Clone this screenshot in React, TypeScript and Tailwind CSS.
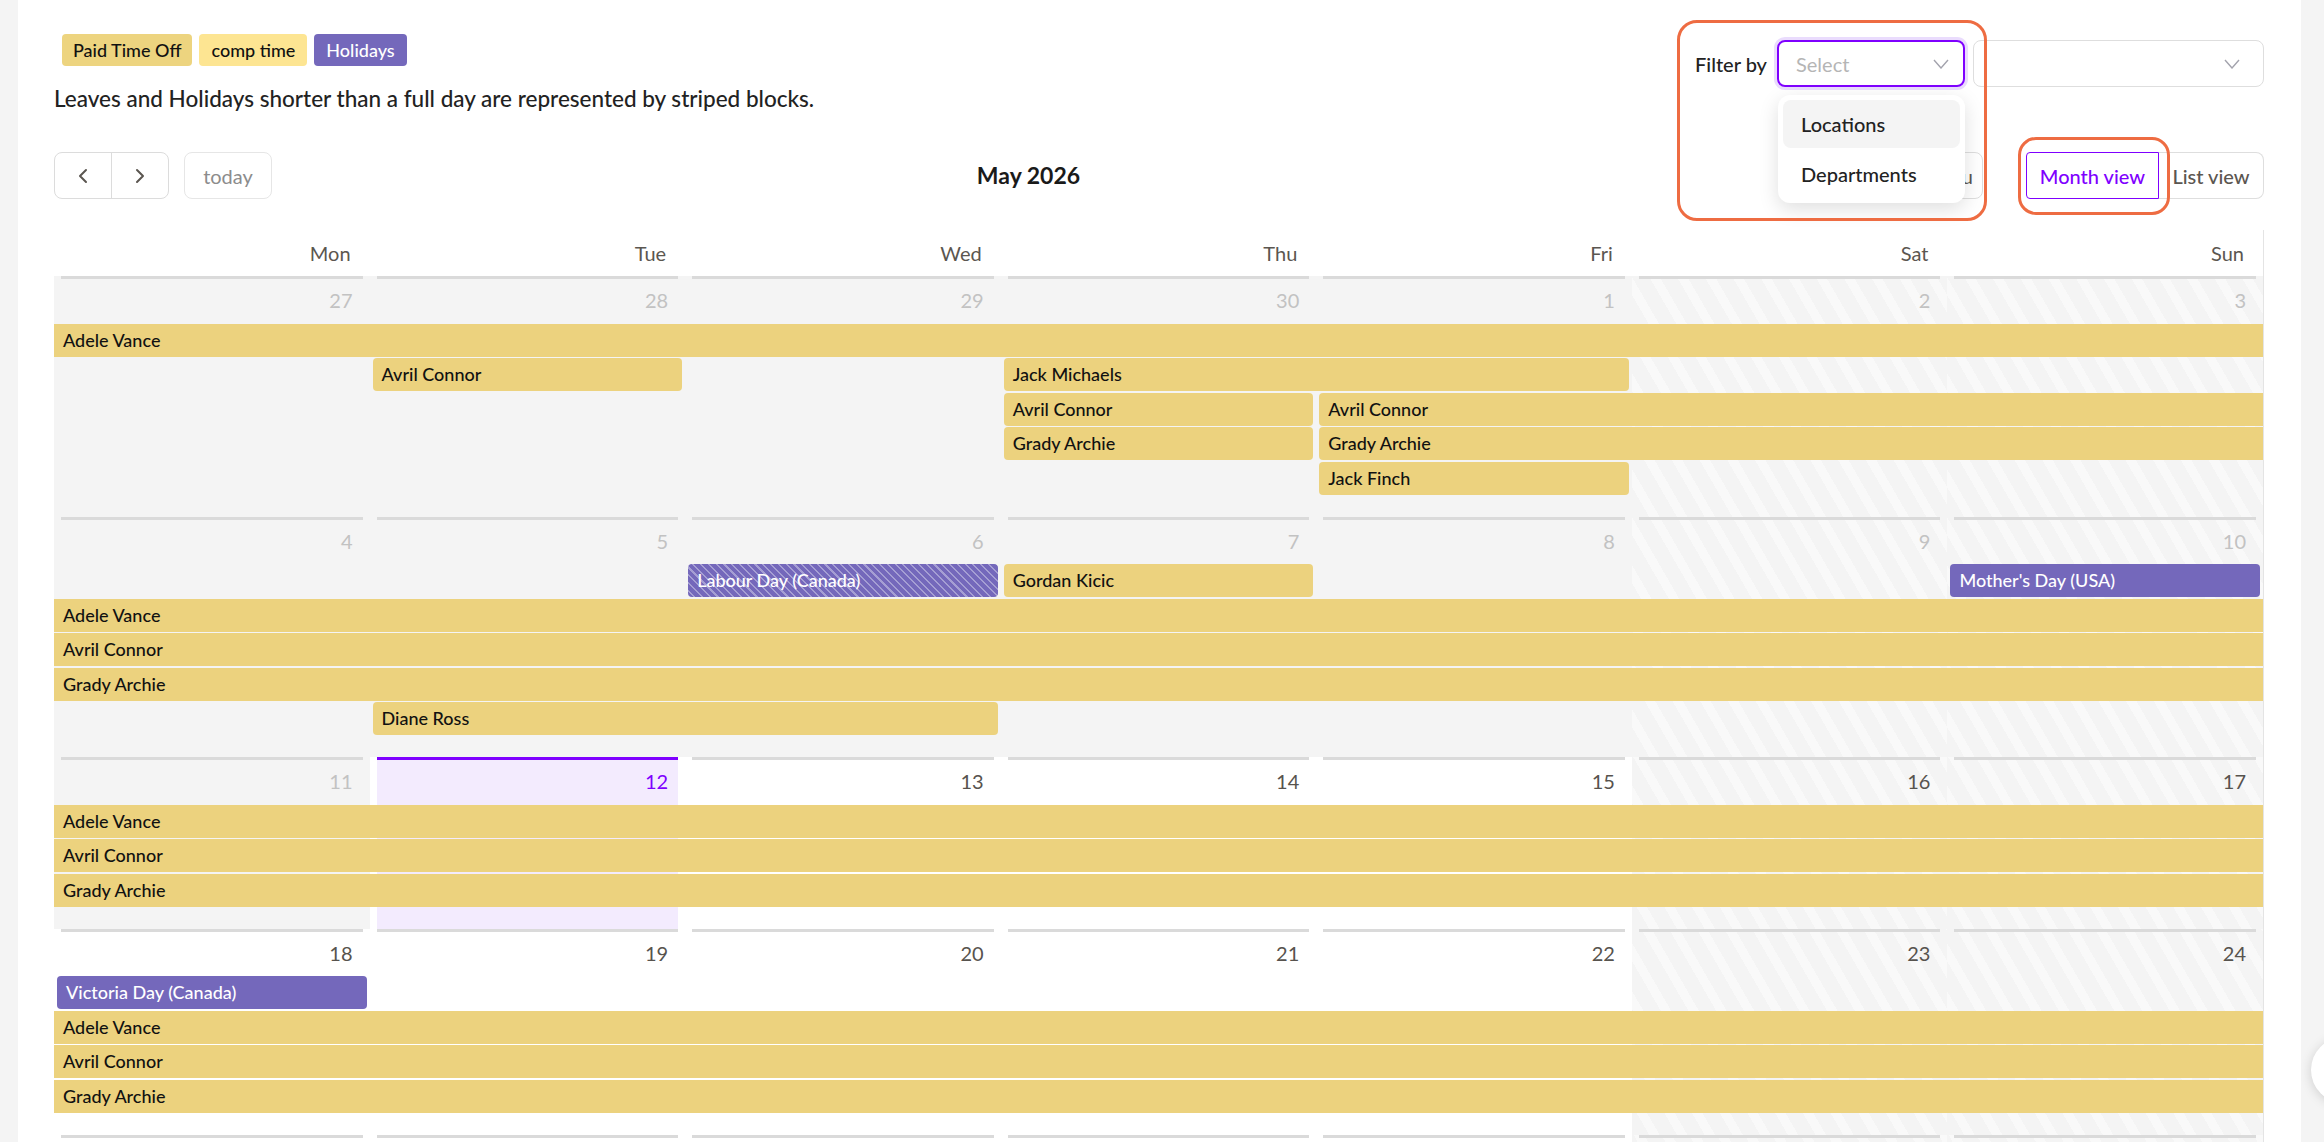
import React from "react";
import { ChevronLeft, ChevronRight } from "lucide-react";

type Kind = "pto" | "holiday" | "holidayHalf";
type Ev = { label: string; start: number; span: number; kind?: Kind; contL?: boolean; contR?: boolean };
type DayState = "other" | "past" | "today" | "future";
type Week = { days: [number, DayState][]; rows: Ev[][] };

const full = (label: string): Ev => ({ label, start: 0, span: 7, contL: true, contR: true });

const weeks: Week[] = [
  {
    days: [[27, "other"], [28, "other"], [29, "other"], [30, "other"], [1, "past"], [2, "past"], [3, "past"]],
    rows: [
      [full("Adele Vance")],
      [{ label: "Avril Connor", start: 1, span: 1 }, { label: "Jack Michaels", start: 3, span: 2 }],
      [{ label: "Avril Connor", start: 3, span: 1 }, { label: "Avril Connor", start: 4, span: 3, contR: true }],
      [{ label: "Grady Archie", start: 3, span: 1 }, { label: "Grady Archie", start: 4, span: 3, contR: true }],
      [{ label: "Jack Finch", start: 4, span: 1 }],
    ],
  },
  {
    days: [[4, "past"], [5, "past"], [6, "past"], [7, "past"], [8, "past"], [9, "past"], [10, "past"]],
    rows: [
      [
        { label: "Labour Day (Canada)", start: 2, span: 1, kind: "holidayHalf" },
        { label: "Gordan Kicic", start: 3, span: 1 },
        { label: "Mother's Day (USA)", start: 6, span: 1, kind: "holiday" },
      ],
      [full("Adele Vance")],
      [full("Avril Connor")],
      [full("Grady Archie")],
      [{ label: "Diane Ross", start: 1, span: 2 }],
    ],
  },
  {
    days: [[11, "past"], [12, "today"], [13, "future"], [14, "future"], [15, "future"], [16, "future"], [17, "future"]],
    rows: [[full("Adele Vance")], [full("Avril Connor")], [full("Grady Archie")]],
  },
  {
    days: [[18, "future"], [19, "future"], [20, "future"], [21, "future"], [22, "future"], [23, "future"], [24, "future"]],
    rows: [
      [{ label: "Victoria Day (Canada)", start: 0, span: 1, kind: "holiday" }],
      [full("Adele Vance")],
      [full("Avril Connor")],
      [full("Grady Archie")],
    ],
  },
  {
    days: [[25, "future"], [26, "future"], [27, "future"], [28, "future"], [29, "future"], [30, "future"], [31, "future"]],
    rows: [[full("Adele Vance")], [full("Avril Connor")], [full("Grady Archie")]],
  },
];

const rowTemplates: Record<number, string> = {
  1: "grid-rows-[47px_repeat(1,34.5px)_21px]",
  2: "grid-rows-[47px_repeat(2,34.5px)_21px]",
  3: "grid-rows-[47px_repeat(3,34.5px)_21px]",
  4: "grid-rows-[47px_repeat(4,34.5px)_21px]",
  5: "grid-rows-[47px_repeat(5,34.5px)_21px]",
};

const dayNames = ["Mon", "Tue", "Wed", "Thu", "Fri", "Sat", "Sun"];

function SelectChevron() {
  return (
    <svg width="16" height="10" viewBox="0 0 16 10" fill="none">
      <polyline points="1,1 8,9 15,1" stroke="#a3a3ad" strokeWidth="1.4" fill="none" />
    </svg>
  );
}

function DayCell({ col, n, state }: { col: number; n: number; state: DayState }) {
  const weekend = col >= 5;
  const outer = weekend
    ? "bg-[repeating-linear-gradient(60deg,#f4f4f4_0px,#f4f4f4_15px,#f9f9f9_15px,#f9f9f9_24px)]"
    : state === "past" || state === "other"
    ? "bg-[#f4f4f4]"
    : "bg-white";
  const inner = state === "today" ? "bg-[#f3ebfe]" : "";
  const line = state === "today" ? "bg-[#7f00ff]" : "bg-[#dadada]";
  const num =
    state === "today" ? "text-[#7f00ff]" : state === "future" ? "text-[#57534e]" : "text-[#c2c2c2]";
  return (
    <div className={`${outer} px-[7px]`} style={{ gridColumn: col + 1, gridRow: "1 / -1" }}>
      <div className={`h-full ${inner}`}>
        <div className={`h-[3px] ${line}`} />
        <div className={`mt-[9px] pr-[10px] text-right text-[20px] leading-[24px] ${num}`}>{n}</div>
      </div>
    </div>
  );
}

function EventBar({ ev, row }: { ev: Ev; row: number }) {
  const kind = ev.kind ?? "pto";
  const color =
    kind === "pto"
      ? "bg-[#ecd27e] text-[#111111]"
      : kind === "holiday"
      ? "bg-[#7468bb] text-white"
      : "bg-[repeating-linear-gradient(45deg,#7468bb_0px,#7468bb_4px,#a59ed3_4px,#a59ed3_5.5px)] text-white";
  const left = ev.contL ? "ml-0 rounded-l-none" : "ml-[3px] rounded-l-[4px]";
  const right = ev.contR ? "mr-0 rounded-r-none" : "mr-[3px] rounded-r-[4px]";
  return (
    <div
      className={`z-10 self-center h-[33px] flex items-center px-[9px] text-[18px] font-medium whitespace-nowrap overflow-hidden ${color} ${left} ${right}`}
      style={{ gridColumn: `${ev.start + 1} / span ${ev.span}`, gridRow: row + 2 }}
    >
      {ev.label}
    </div>
  );
}

export default function App() {
  return (
    <div className="relative min-h-screen bg-[#f4f4f4] pl-[18px] pr-[23px] font-[family-name:Lato,sans-serif] text-[#222222] overflow-hidden">
      <div className="bg-white pl-[36px] pr-[37px] pt-[34px] pb-[40px]">
        {/* Legend and filters */}
        <div className="flex justify-between items-start">
          <div>
            <div className="ml-[8px] flex gap-[7px]">
              <span className="h-[32px] px-[11px] flex items-center rounded-[4px] bg-[#edd47f] text-[18px] font-medium text-[#111111]">
                Paid Time Off
              </span>
              <span className="h-[32px] px-[12px] flex items-center rounded-[4px] bg-[#fde592] text-[18px] font-medium text-[#111111]">
                comp time
              </span>
              <span className="h-[32px] px-[12px] flex items-center rounded-[4px] bg-[#7468bb] text-[18px] font-medium text-white">
                Holidays
              </span>
            </div>
            <p className="mt-[19px] text-[22.5px] leading-[28px] font-medium text-[#222222]">
              Leaves and Holidays shorter than a full day are represented by striped blocks.
            </p>
          </div>
          <div className="mt-[6px] flex items-center gap-[8px]">
            <span className="text-[20px] font-medium text-[#222222] mr-[2px]">Filter by</span>
            <div className="relative">
              <div className="w-[188px] h-[47px] rounded-[8px] border-2 border-[#7f00ff] ring-[3px] ring-[#eadcfd] flex items-center justify-between pl-[17px] pr-[14px]">
                <span className="text-[20px] text-[#b5b5b5]">Select</span>
                <SelectChevron />
              </div>
              <div className="absolute z-20 left-[1px] top-[55px] w-[187px] rounded-[12px] bg-white p-[5px] shadow-[0_6px_20px_rgba(0,0,0,0.13)]">
                <div className="h-[48px] rounded-[8px] bg-[#f4f4f4] pl-[18px] flex items-center text-[20px] font-medium text-[#222222]">
                  Locations
                </div>
                <div className="mt-[2px] h-[48px] rounded-[8px] pl-[18px] flex items-center text-[20px] font-medium text-[#222222]">
                  Departments
                </div>
              </div>
            </div>
            <div className="w-[291px] h-[47px] rounded-[8px] border border-[#dedede] flex items-center justify-end pr-[23px]">
              <SelectChevron />
            </div>
          </div>
        </div>

        {/* Toolbar */}
        <div className="mt-[39px] flex items-center justify-between">
          <div className="flex items-center gap-[15px]">
            <div className="flex h-[47px] rounded-[8px] border border-[#dcdcdc]">
              <button className="w-[56px] flex items-center justify-center text-[#5b5650]">
                <ChevronLeft size={24} strokeWidth={2} />
              </button>
              <button className="w-[57px] flex items-center justify-center border-l border-[#dcdcdc] text-[#5b5650]">
                <ChevronRight size={24} strokeWidth={2} />
              </button>
            </div>
            <button className="w-[88px] h-[47px] rounded-[8px] border border-[#e6e6e6] text-[20px] text-[#8c8c8c]">
              today
            </button>
          </div>
          <h2 className="text-[23px] font-bold text-[#1a1a1a]">May 2026</h2>
          <div className="flex items-center gap-[43px]">
            <button className="w-[198px] h-[47px] rounded-[8px] border border-[#dedede] text-right pr-[9px] text-[20px] text-[#5b5650]">
              Menu
            </button>
            <div className="flex h-[47px]">
              <button className="w-[133px] rounded-l-[4px] border border-[#7f00ff] text-[20px] font-medium text-[#7f00ff]">
                Month view
              </button>
              <button className="w-[105px] rounded-r-[8px] border border-l-0 border-[#dedede] text-[20px] font-medium text-[#5b5650]">
                List view
              </button>
            </div>
          </div>
        </div>

        {/* Month grid */}
        <div className="mt-[31px] border-r border-[#e4e4e4]">
          <div className="grid grid-cols-7 h-[46px]">
            {dayNames.map((d) => (
              <div key={d} className="flex items-center justify-end pr-[19px] text-[20px] text-[#5b5650]">
                {d}
              </div>
            ))}
          </div>
          {weeks.map((w, wi) => (
            <div key={wi} className={`grid grid-cols-7 ${rowTemplates[w.rows.length]}`}>
              {w.days.map(([n, st], ci) => (
                <DayCell key={ci} col={ci} n={n} state={st} />
              ))}
              {w.rows.map((row, ri) => row.map((ev, ei) => <EventBar key={`${ri}-${ei}`} ev={ev} row={ri} />))}
            </div>
          ))}
        </div>
      </div>

      {/* Highlight outlines */}
      <div className="absolute z-30 left-[1677px] top-[20px] w-[310px] h-[201px] rounded-[20px] border-[3px] border-[#ee6c42] pointer-events-none" />
      <div className="absolute z-30 left-[2018px] top-[137px] w-[152px] h-[78px] rounded-[18px] border-[3px] border-[#ee6c42] pointer-events-none" />

      {/* Floating help button */}
      <div className="absolute z-30 left-[2311px] top-[1037px] w-[66px] h-[66px] rounded-full bg-white shadow-[0_2px_12px_rgba(0,0,0,0.15)]" />
    </div>
  );
}
